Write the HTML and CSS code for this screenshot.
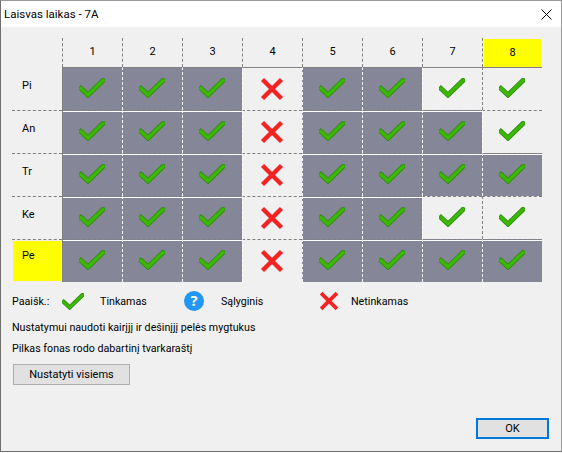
FILE: index.html
```html
<!DOCTYPE html>
<html lang="lt">
<head>
<meta charset="utf-8">
<title>Laisvas laikas - 7A</title>
<link rel="stylesheet" href="styles.css">
</head>
<body>
<svg class="defs" width="0" height="0" aria-hidden="true">
  <symbol id="ok" viewBox="0 0 26 20">
    <path class="ok-edge" d="M2 10.5 L9 17 L24 2.5"/>
    <path class="ok-fill" d="M2 10.5 L9 17 L24 2.5"/>
  </symbol>
  <symbol id="no" viewBox="0 0 24 24">
    <path class="no-line" d="M2.5 2.5 L21.5 21.5 M21.5 2.5 L2.5 21.5"/>
  </symbol>
</svg>
<div class="window">
  <header class="titlebar">
    <span class="title">Laisvas laikas - 7A</span>
    <svg class="close" width="11" height="11" viewBox="0 0 11 11"><path d="M.5 .5 L10.5 10.5 M10.5 .5 L.5 10.5"/></svg>
  </header>
  <main class="content">
    <div class="grid">
      <div class="corner"></div>
      <div class="head">1</div><div class="head">2</div><div class="head">3</div><div class="head">4</div><div class="head">5</div><div class="head">6</div><div class="head">7</div><div class="head head-on"><span class="head-mark">8</span></div>

      <div class="day day-first">Pi</div>
      <div class="cell busy first top"><svg class="i-ok"><use href="#ok"/></svg></div>
      <div class="cell busy top"><svg class="i-ok"><use href="#ok"/></svg></div>
      <div class="cell busy top"><svg class="i-ok"><use href="#ok"/></svg></div>
      <div class="cell after top"><svg class="i-no"><use href="#no"/></svg></div>
      <div class="cell busy top"><svg class="i-ok"><use href="#ok"/></svg></div>
      <div class="cell busy top"><svg class="i-ok"><use href="#ok"/></svg></div>
      <div class="cell after top"><svg class="i-ok"><use href="#ok"/></svg></div>
      <div class="cell top"><svg class="i-ok"><use href="#ok"/></svg></div>

      <div class="day">An</div>
      <div class="cell busy first"><svg class="i-ok"><use href="#ok"/></svg></div>
      <div class="cell busy"><svg class="i-ok"><use href="#ok"/></svg></div>
      <div class="cell busy"><svg class="i-ok"><use href="#ok"/></svg></div>
      <div class="cell after"><svg class="i-no"><use href="#no"/></svg></div>
      <div class="cell busy"><svg class="i-ok"><use href="#ok"/></svg></div>
      <div class="cell busy"><svg class="i-ok"><use href="#ok"/></svg></div>
      <div class="cell busy"><svg class="i-ok"><use href="#ok"/></svg></div>
      <div class="cell after"><svg class="i-ok"><use href="#ok"/></svg></div>

      <div class="day">Tr</div>
      <div class="cell busy first"><svg class="i-ok"><use href="#ok"/></svg></div>
      <div class="cell busy"><svg class="i-ok"><use href="#ok"/></svg></div>
      <div class="cell busy"><svg class="i-ok"><use href="#ok"/></svg></div>
      <div class="cell after"><svg class="i-no"><use href="#no"/></svg></div>
      <div class="cell busy"><svg class="i-ok"><use href="#ok"/></svg></div>
      <div class="cell busy"><svg class="i-ok"><use href="#ok"/></svg></div>
      <div class="cell busy"><svg class="i-ok"><use href="#ok"/></svg></div>
      <div class="cell busy"><svg class="i-ok"><use href="#ok"/></svg></div>

      <div class="day">Ke</div>
      <div class="cell busy first"><svg class="i-ok"><use href="#ok"/></svg></div>
      <div class="cell busy"><svg class="i-ok"><use href="#ok"/></svg></div>
      <div class="cell busy"><svg class="i-ok"><use href="#ok"/></svg></div>
      <div class="cell after"><svg class="i-no"><use href="#no"/></svg></div>
      <div class="cell busy"><svg class="i-ok"><use href="#ok"/></svg></div>
      <div class="cell busy"><svg class="i-ok"><use href="#ok"/></svg></div>
      <div class="cell after"><svg class="i-ok"><use href="#ok"/></svg></div>
      <div class="cell"><svg class="i-ok"><use href="#ok"/></svg></div>

      <div class="day day-on"><span class="day-mark">Pe</span></div>
      <div class="cell busy first"><svg class="i-ok"><use href="#ok"/></svg></div>
      <div class="cell busy"><svg class="i-ok"><use href="#ok"/></svg></div>
      <div class="cell busy"><svg class="i-ok"><use href="#ok"/></svg></div>
      <div class="cell after"><svg class="i-no"><use href="#no"/></svg></div>
      <div class="cell busy"><svg class="i-ok"><use href="#ok"/></svg></div>
      <div class="cell busy"><svg class="i-ok"><use href="#ok"/></svg></div>
      <div class="cell busy"><svg class="i-ok"><use href="#ok"/></svg></div>
      <div class="cell busy"><svg class="i-ok"><use href="#ok"/></svg></div>
    </div>

    <div class="legend">
      <span class="legend-title">Paaišk.:</span>
      <svg class="legend-ok"><use href="#ok"/></svg>
      <span class="legend-good">Tinkamas</span>
      <svg class="legend-q" viewBox="0 0 20 20"><circle cx="10" cy="10" r="10"/><text x="10" y="15" text-anchor="middle">?</text></svg>
      <span class="legend-maybe">Sąlyginis</span>
      <svg class="legend-no"><use href="#no"/></svg>
      <span class="legend-bad">Netinkamas</span>
    </div>
    <p class="note note-first">Nustatymui naudoti kairįjį ir dešinįjį pelės mygtukus</p>
    <p class="note">Pilkas fonas rodo dabartinį tvarkaraštį</p>
    <button class="btn btn-all" type="button">Nustatyti visiems</button>
    <div class="actions">
      <button class="btn btn-ok" type="button">OK</button>
    </div>
  </main>
</div>
</body>
</html>
```
FILE: styles.css
```css
* { box-sizing: border-box; }
html, body { margin: 0; padding: 0; background: #fff; }
body {
  width: 562px;
  height: 453px;
  overflow: hidden;
  font-family: Roboto, "Liberation Sans", sans-serif;
  font-size: 11px;
  color: #000;
}
.defs { display: block; height: 0; }
.window {
  width: 562px;
  height: 452px;
  border: 1px solid #6f6f6f;
  border-top-color: #9a9a9a;
  border-right-color: #9a9a9a;
  display: flex;
  flex-direction: column;
  background: #f0f0f0;
}
.titlebar {
  height: 26px;
  flex: none;
  background: #fff;
  display: flex;
  align-items: center;
  justify-content: space-between;
  padding: 0 9px 0 3px;
}
.title { font-size: 11.5px; }
.close { stroke: #000; stroke-width: 1; fill: none; }
.content {
  flex: 1;
  display: flex;
  flex-direction: column;
  padding: 11px 0 0 11px;
}
.grid {
  display: grid;
  grid-template-columns: 50px repeat(8, 60px);
  grid-template-rows: 29px repeat(5, 43px);
  width: 530px;
}
.head {
  border-left: 1px dashed #808080;
  display: flex;
  align-items: center;
  justify-content: center;
  padding-bottom: 2px;
}
.head-on { padding: 1px 0 0 1px; align-items: stretch; justify-content: stretch; }
.head-mark {
  flex: 1;
  margin-right: 1px;
  background: #ff0;
  display: flex;
  align-items: center;
  justify-content: center;
  padding-bottom: 2px;
}
.day {
  border-top: 1px dashed #808080;
  padding: 5px 0 0 10px;
  display: flex;
  line-height: 26px;
}
.day-first { border-top: 0; padding-top: 6px; }
.day-on { padding: 1px 1px 1px 1px; }
.day-mark { flex: 1; background: #ff0; padding: 2px 0 0 9px; }
.cell {
  border-left: 1px dashed #808080;
  border-top: 1px dashed #808080;
  display: flex;
  align-items: center;
  justify-content: center;
}
.top { border-top: 1px solid #808080; }
.busy {
  background: #868699;
  border-left-color: #fff;
  box-shadow: inset 0 1px 0 #fff;
}
.top.busy { box-shadow: none; }
.first { border-left: 1px solid #808080; }
.after { border-left-color: #fff; }
.i-ok { width: 26px; height: 20px; margin: -3px 2px 0 0; }
.i-no { width: 24px; height: 24px; margin: -1px 1px 0 0; }
.ok-edge, .ok-fill { fill: none; stroke-linecap: square; }
.ok-edge { stroke: #2c8c12; stroke-width: 5; }
.ok-fill { stroke: #3cb800; stroke-width: 3.3; }
.no-line { fill: none; stroke: #f52222; stroke-width: 4.4; }
.legend {
  display: flex;
  align-items: center;
  height: 22px;
  margin-top: 8px;
  font-size: 10.7px;
}
.legend-title { width: 50px; }
.legend-ok { width: 22px; height: 17px; }
.legend-good { margin-left: 16px; width: 84px; }
.legend-q { width: 20px; height: 20px; }
.legend-q circle { fill: #2196f3; }
.legend-q text {
  fill: #fff;
  font-family: "Open Sans", sans-serif;
  font-size: 15px;
  font-weight: 700;
}
.legend-maybe { margin-left: 17px; width: 98px; }
.legend-no { width: 20px; height: 20px; }
.legend-bad { margin-left: 12px; }
.note { margin: 0; line-height: 21px; font-size: 10.7px; }
.note-first { margin-top: 5px; }
.btn {
  font: inherit;
  color: inherit;
  background: #e1e1e1;
  padding: 0;
}
.btn-all {
  width: 117px;
  height: 21px;
  margin: 5px 0 0 1px;
  border: 1px solid #adadad;
}
.actions {
  display: flex;
  justify-content: flex-end;
  margin-top: 33px;
  padding-right: 12px;
}
.btn-ok {
  width: 73px;
  height: 21px;
  border: 2px solid #0078d7;
}
```
